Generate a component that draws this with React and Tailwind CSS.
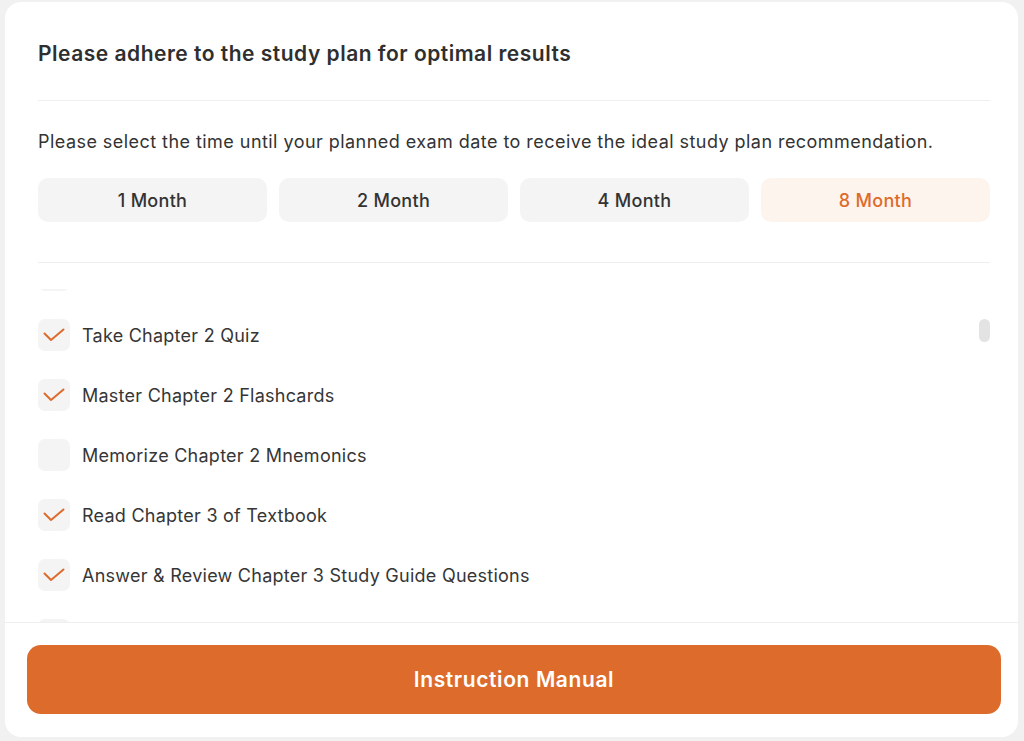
import { useEffect, useRef, useState } from "react";

const PERIODS = ["1 Month", "2 Month", "4 Month", "8 Month"];

const TASKS = [
  { label: "Answer & Review Chapter 2 Study Guide Questions", done: true },
  { label: "Read Chapter 2 of Textbook", done: true },
  { label: "Take Chapter 2 Quiz", done: true },
  { label: "Master Chapter 2 Flashcards", done: true },
  { label: "Memorize Chapter 2 Mnemonics", done: false },
  { label: "Read Chapter 3 of Textbook", done: true },
  { label: "Answer & Review Chapter 3 Study Guide Questions", done: true },
  { label: "Take Chapter 3 Quiz", done: false },
  { label: "Master Chapter 3 Flashcards", done: false },
];

function CheckMark() {
  return (
    <svg width="22" height="14" viewBox="0 0 22 14" fill="none">
      <path d="M1.5 5.5 8 12 20.5 1.5" stroke="#dd6b2c" strokeWidth="2" strokeLinecap="round" strokeLinejoin="round" />
    </svg>
  );
}

export default function App() {
  const [period, setPeriod] = useState("8 Month");
  const [tasks, setTasks] = useState(TASKS);
  const listRef = useRef(null);

  useEffect(() => {
    if (listRef.current) listRef.current.scrollTop = 104;
  }, []);

  const toggle = (i) =>
    setTasks((t) => t.map((x, j) => (j === i ? { ...x, done: !x.done } : x)));

  return (
    <div
      className="w-[1024px] h-[741px] bg-[#f1f1f1] pl-[5px] pr-[6px] pt-[2px] pb-[4px]"
      style={{ fontFamily: "Inter, 'Noto Sans', sans-serif" }}
    >
      <div className="h-full bg-white rounded-[16px] flex flex-col overflow-hidden">
        {/* Header */}
        <div className="pl-[33px] pr-[28px] pt-[38px]">
          <h2 className="text-[21px] leading-[28px] font-semibold text-[#2f2f2f] tracking-[0.5px]">
            Please adhere to the study plan for optimal results
          </h2>
          <div className="mt-[32px] border-t border-[#eeeeee]" />
          <p className="mt-[27px] text-[18px] leading-[28px] text-[#333333] tracking-[0.45px]">
            Please select the time until your planned exam date to receive the ideal study plan recommendation.
          </p>
          <div className="mt-[22px] grid grid-cols-4 gap-[12px]">
            {PERIODS.map((p) => (
              <button
                key={p}
                onClick={() => setPeriod(p)}
                className={`h-[44px] rounded-[10px] text-[18px] font-medium tracking-[0.3px] ${
                  period === p ? "bg-[#fdf4ed] text-[#dd6b2c]" : "bg-[#f4f4f4] text-[#333333]"
                }`}
              >
                {p}
              </button>
            ))}
          </div>
          <div className="mt-[40px] border-t border-[#eeeeee]" />
        </div>

        {/* Checklist */}
        <div className="relative flex-1 min-h-0 mt-[26px] pl-[33px] pr-[28px]">
          <div ref={listRef} className="h-full overflow-y-auto [scrollbar-width:none]">
            {tasks.map((t, i) => (
              <div key={t.label} className="h-[60px] flex items-center gap-[12px]">
                <button
                  onClick={() => toggle(i)}
                  className="w-[32px] h-[32px] shrink-0 rounded-[7px] bg-[#f4f4f4] flex items-center justify-center"
                >
                  {t.done && <CheckMark />}
                </button>
                <span className="text-[18px] text-[#363636] tracking-[0.25px]">{t.label}</span>
              </div>
            ))}
          </div>
          <div className="absolute right-[28px] top-[30px] w-[11px] h-[23px] rounded-full bg-[#e3e3e3]" />
        </div>

        {/* Footer */}
        <div className="border-t border-[#efefef] pl-[22px] pr-[17px] pt-[22px] pb-[23px]">
          <button className="w-full h-[69px] rounded-[14px] bg-[#dc6b2c] text-white text-[21px] font-semibold tracking-[0.6px]">
            Instruction Manual
          </button>
        </div>
      </div>
    </div>
  );
}
